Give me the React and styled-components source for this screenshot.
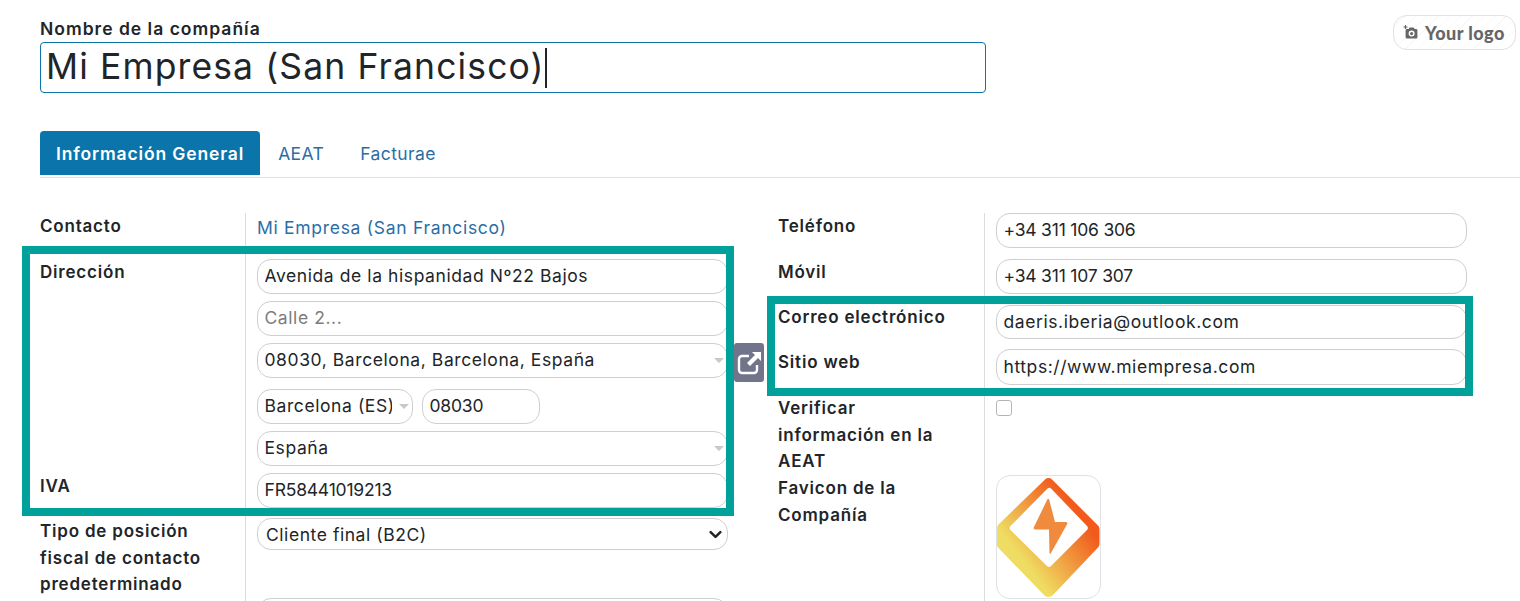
import React from "react";
import styled, { createGlobalStyle } from "styled-components";

const GlobalStyle = createGlobalStyle`
  html, body {
    margin: 0;
    padding: 0;
    background: #fff;
    overflow: hidden;
  }
  body {
    font-family: Inter, "Noto Sans", sans-serif;
    color: #212529;
  }
`;

const Page = styled.div`
  position: relative;
  width: 1520px;
  height: 601px;
  overflow: hidden;
  padding: 19px 0 0 40px;
  box-sizing: border-box;
`;

const Header = styled.div`
  width: 946px;
`;

const NameLabel = styled.div`
  font-size: 17.5px;
  font-weight: 600;
  line-height: 19px;
  height: 23px;
  letter-spacing: 1px;
`;

const NameBox = styled.div`
  height: 51px;
  box-sizing: border-box;
  border: 1px solid #0b74a8;
  border-radius: 4px;
  padding: 0 0 2px 5px;
  display: flex;
  align-items: center;
  font-size: 35.5px;
  font-weight: 400;
  letter-spacing: 1.12px;
`;

const Caret = styled.span`
  width: 2px;
  height: 40px;
  margin-top: 2px;
  background: #212529;
`;

const LogoButton = styled.div`
  position: absolute;
  top: 15px;
  left: 1393px;
  width: 123px;
  height: 35px;
  box-sizing: border-box;
  border: 1px solid #e2e2e2;
  border-radius: 14px;
  display: flex;
  align-items: center;
  gap: 6px;
  padding-left: 9px;
  font-family: Lato, sans-serif;
  font-weight: 900;
  font-size: 18px;
  letter-spacing: 0.45px;
  color: #666;
  background: repeating-linear-gradient(135deg, #fff 0 7px, #f8f8f8 7px 8px);
`;

const Tabs = styled.div`
  margin-top: 38px;
  height: 47px;
  display: flex;
  border-bottom: 1px solid #dee2e6;
  box-sizing: border-box;
`;

const Tab = styled.div`
  height: 44px;
  display: flex;
  align-items: center;
  padding: 0 ${(props) => (props.$active ? "16px" : "18px")};
  font-size: 17.5px;
  letter-spacing: ${(props) => (props.$active ? "0.85px" : "0.4px")};
  font-weight: ${(props) => (props.$active ? 600 : 400)};
  color: ${(props) => (props.$active ? "#fff" : "#2a6ea6")};
  background: ${(props) => (props.$active ? "#0a74ab" : "transparent")};
  border-radius: ${(props) => (props.$active ? "4px 4px 0 0" : "0")};
`;

const Columns = styled.div`
  margin-top: 35px;
  display: flex;
  align-items: flex-start;
`;

const Column = styled.div`
  width: ${(props) => props.$width}px;
  margin-right: ${(props) => props.$gap || 0}px;
  flex: none;
`;

const Row = styled.div`
  display: grid;
  grid-template-columns: ${(props) => props.$labelWidth || 205}px 1fr;
  min-height: ${(props) => props.$height}px;
`;

const Label = styled.div`
  font-size: 17px;
  font-weight: 600;
  line-height: 26.6px;
  letter-spacing: 0.8px;
  margin-top: ${(props) => props.$top || 0}px;
  padding-right: 20px;
`;

const Value = styled.div`
  border-left: 1px solid #dcdcdc;
  padding-left: 11px;
  box-sizing: border-box;
  display: flex;
  flex-direction: column;
  gap: 7px;
  align-items: flex-start;
`;

const Pair = styled.div`
  display: flex;
  gap: 9px;
  margin-top: 4px;
`;

const Field = styled.input`
  display: block;
  width: ${(props) => props.$width || 471}px;
  height: ${(props) => props.$height || 35}px;
  box-sizing: border-box;
  border: 1px solid #cfcfcf;
  border-radius: 14px;
  padding: 0 ${(props) => (props.$select ? "20px" : "6px")} 2px 6.5px;
  outline: none;
  font-family: inherit;
  font-size: 17.5px;
  letter-spacing: ${(props) => (props.$numeric ? "-0.2px" : "0.58px")};
  color: #212529;
  background: #fff;
  &::placeholder {
    color: #7c7c7c;
    opacity: 1;
  }
`;

const ComboWrap = styled.div`
  position: relative;
`;

const ComboArrow = styled.span`
  position: absolute;
  right: 4px;
  top: 15px;
  width: 0;
  height: 0;
  border-left: 5px solid transparent;
  border-right: 5px solid transparent;
  border-top: 5px solid #c8c8c8;
`;

const ContactLink = styled.div`
  font-size: 17.5px;
  color: #2a6ea6;
  letter-spacing: 0.7px;
  line-height: 29px;
`;

const Native = styled.div`
  width: 471px;
  height: 32px;
  box-sizing: border-box;
  border: 1px solid #cfcfcf;
  border-radius: 14px;
  padding: 1px 5px 0 8px;
  display: flex;
  align-items: center;
  justify-content: space-between;
  font-size: 17.5px;
  letter-spacing: 0.55px;
`;

const Check = styled.span`
  display: block;
  width: 16px;
  height: 16px;
  box-sizing: border-box;
  border: 1px solid #b5b5b5;
  border-radius: 3px;
  margin-top: 5px;
`;

const Favicon = styled.div`
  width: 105px;
  height: 124px;
  box-sizing: border-box;
  border: 1px solid #dee2e6;
  border-radius: 14px;
  display: flex;
  align-items: center;
  justify-content: center;
`;

const OpenButton = styled.div`
  position: absolute;
  left: 734px;
  top: 343px;
  width: 30px;
  height: 39px;
  border-radius: 3px;
  background: #71748a;
  display: flex;
  align-items: center;
  justify-content: center;
`;

const Highlight = styled.div`
  position: absolute;
  left: ${(props) => props.$x}px;
  top: ${(props) => props.$y}px;
  width: ${(props) => props.$w}px;
  height: ${(props) => props.$h}px;
  box-sizing: border-box;
  border: 8px solid #00a19a;
  pointer-events: none;
`;

const CameraIcon = () => (
  <svg width="16" height="15" viewBox="0 0 16 15">
    <path fill="#666" d="M4 4h1.600l1-1.400h4l1 1.400h1.400a1.400 1.400 0 0 1 1.400 1.400v6.800a1.400 1.400 0 0 1-1.400 1.400H4a1.400 1.400 0 0 1-1.400-1.400V5.400A1.400 1.400 0 0 1 4 4z" />
    <circle cx="8.600" cy="8.600" r="2.300" fill="none" stroke="#fff" strokeWidth="1.400" />
    <path stroke="#666" strokeWidth="1.200" d="M2.500 0v4M.5 2h4" />
  </svg>
);

const ExternalIcon = () => (
  <svg width="26" height="26" viewBox="0 0 26 26" fill="none">
    <path stroke="#fff" strokeWidth="2.400" strokeLinejoin="round" d="M13 6H6a3 3 0 0 0-3 3v11a3 3 0 0 0 3 3h12a3 3 0 0 0 3-3v-5" />
    <path fill="#fff" d="M16 2h9v9l-3-3-8 8-3-3 8-8z" />
  </svg>
);

const Chevron = () => (
  <svg width="13" height="13" viewBox="0 0 16 16" fill="none">
    <path stroke="#212529" strokeWidth="3" strokeLinecap="round" strokeLinejoin="round" d="M2 5l6 6 6-6" />
  </svg>
);

const FaviconLogo = () => (
  <svg width="103" height="122" viewBox="0 0 103 122">
    <defs>
      <linearGradient id="logoFill" x1="0.78" y1="0.28" x2="0.28" y2="0.72">
        <stop offset="0" stopColor="#f15a1c" />
        <stop offset="1" stopColor="#efdc62" />
      </linearGradient>
    </defs>
    <path fill="url(#logoFill)" fillRule="evenodd" d="M48 3.500a5 5 0 0 1 7 0L100.500 49a5 5 0 0 1 2 4v15a5 5 0 0 1-2 4L56 119a6 6 0 0 1-9 0L2 72.500a5 5 0 0 1-2-4V52a5 5 0 0 1 2-4zM50.500 12.500L14 49.500a3 3 0 0 0 0 5L50 90a3 3 0 0 0 4 0L89.500 54.500a3 3 0 0 0 0-5L54 12.500a2.500 2.500 0 0 0-3.500 0z" />
    <path fill="#f08a3c" d="M50.500 23L36.500 52l1 1.500H52l.5 24 1 .2L70.500 47.500 69.500 46H58l-6-23z" />
  </svg>
);

export default function App() {
  return (
    <Page>
      <GlobalStyle />
      <Header>
        <NameLabel>Nombre de la compañía</NameLabel>
        <NameBox>
          Mi Empresa (San Francisco)
          <Caret />
        </NameBox>
      </Header>
      <LogoButton>
        <CameraIcon />
        Your logo
      </LogoButton>

      <Tabs>
        <Tab $active>Información General</Tab>
        <Tab>AEAT</Tab>
        <Tab>Facturae</Tab>
      </Tabs>

      <Columns>
        <Column $width={688} $gap={50}>
          <Row $height={46}>
            <Label>Contacto</Label>
            <Value>
              <ContactLink>Mi Empresa (San Francisco)</ContactLink>
            </Value>
          </Row>
          <Row $height={214}>
            <Label>Dirección</Label>
            <Value>
              <Field readOnly defaultValue="Avenida de la hispanidad Nº22 Bajos" />
              <Field readOnly placeholder="Calle 2..." />
              <ComboWrap>
                <Field $select readOnly defaultValue="08030, Barcelona, Barcelona, España" />
                <ComboArrow />
              </ComboWrap>
              <Pair>
                <ComboWrap>
                  <Field $select $width={156} readOnly defaultValue="Barcelona (ES)" />
                  <ComboArrow />
                </ComboWrap>
                <Field $numeric $width={118} readOnly defaultValue="08030" />
              </Pair>
              <ComboWrap>
                <Field $select readOnly defaultValue="España" />
                <ComboArrow />
              </ComboWrap>
            </Value>
          </Row>
          <Row $height={45}>
            <Label>IVA</Label>
            <Value>
              <Field $numeric readOnly defaultValue="FR58441019213" />
            </Value>
          </Row>
          <Row $height={80}>
            <Label>Tipo de posición fiscal de contacto predeterminado</Label>
            <Value>
              <Native>
                Cliente final (B2C)
                <Chevron />
              </Native>
            </Value>
          </Row>
          <Row $height={30}>
            <Label />
            <Value>
              <Field readOnly />
            </Value>
          </Row>
        </Column>

        <Column $width={689}>
          <Row $height={46} $labelWidth={206}>
            <Label>Teléfono</Label>
            <Value>
              <Field $numeric readOnly defaultValue="+34 311 106 306" />
            </Value>
          </Row>
          <Row $height={46} $labelWidth={206}>
            <Label>Móvil</Label>
            <Value>
              <Field $numeric readOnly defaultValue="+34 311 107 307" />
            </Value>
          </Row>
          <Row $height={44} $labelWidth={206}>
            <Label $top={-1}>Correo electrónico</Label>
            <Value>
              <Field $height={34} readOnly defaultValue="daeris.iberia@outlook.com" />
            </Value>
          </Row>
          <Row $height={46} $labelWidth={206}>
            <Label>Sitio web</Label>
            <Value>
              <Field $height={36} readOnly defaultValue="https://www.miempresa.com" />
            </Value>
          </Row>
          <Row $height={80} $labelWidth={206}>
            <Label>Verificar información en la AEAT</Label>
            <Value>
              <Check />
            </Value>
          </Row>
          <Row $height={130} $labelWidth={206}>
            <Label>Favicon de la Compañía</Label>
            <Value>
              <Favicon>
                <FaviconLogo />
              </Favicon>
            </Value>
          </Row>
        </Column>
      </Columns>

      <OpenButton>
        <ExternalIcon />
      </OpenButton>
      <Highlight $x={22} $y={246} $w={712} $h={270} />
      <Highlight $x={767} $y={296} $w={706} $h={100} />
    </Page>
  );
}
